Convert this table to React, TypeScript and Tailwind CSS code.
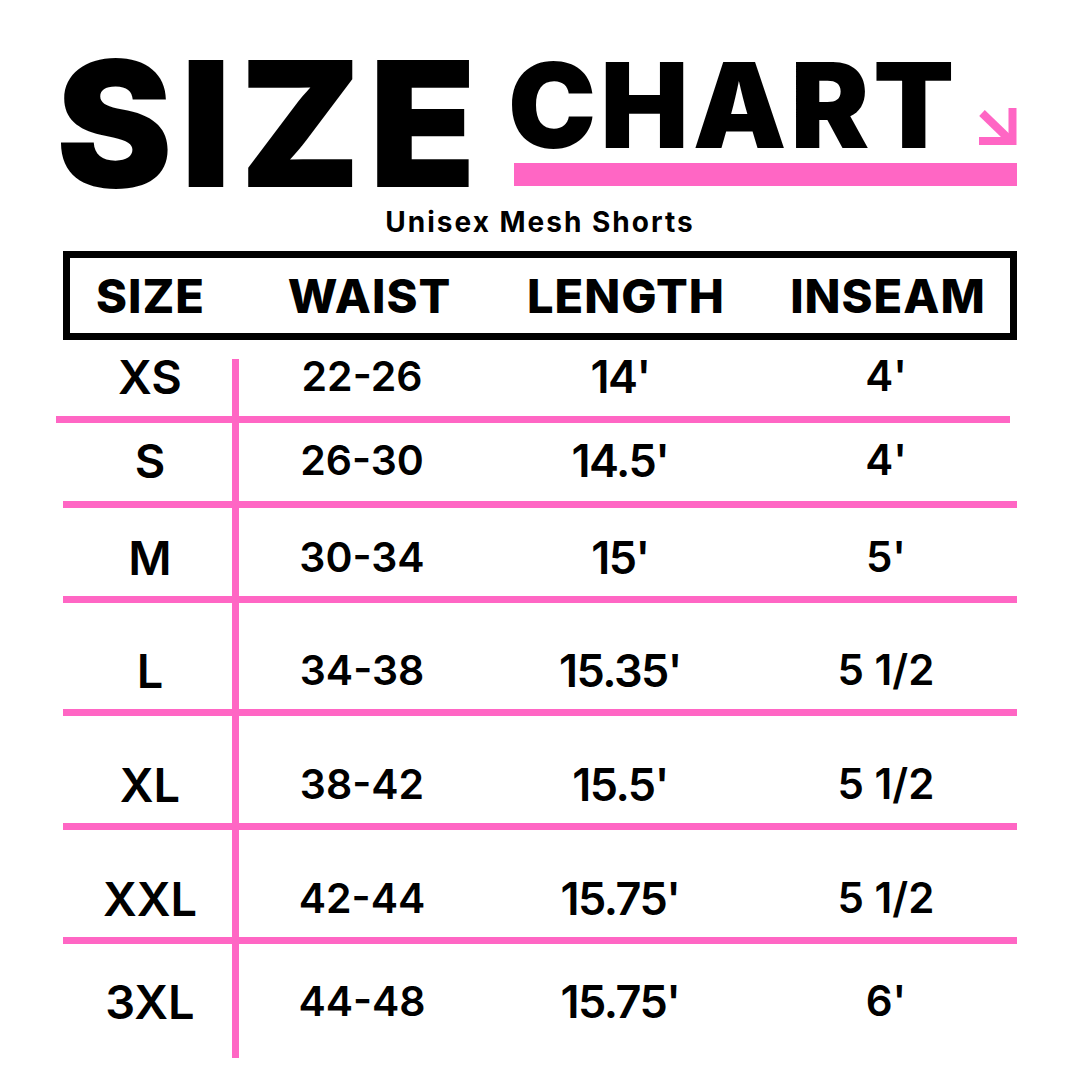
import React from "react";

const rows = [
  { size: "XS", waist: "22-26", length: "14'", inseam: "4'", mt: "mt-[19px]", h: "h-[57px]", c: "h-[34px]" },
  { size: "S", waist: "26-30", length: "14.5'", inseam: "4'", mt: "", h: "h-[78px]", c: "h-[74px]" },
  { size: "M", waist: "30-34", length: "15'", inseam: "5'", mt: "", h: "h-[88px]", c: "h-[98px]" },
  { size: "L", waist: "34-38", length: "15.35'", inseam: "5 1/2", mt: "", h: "h-[106px]", c: "h-[134px]" },
  { size: "XL", waist: "38-42", length: "15.5'", inseam: "5 1/2", mt: "", h: "h-[107px]", c: "h-[136px]" },
  { size: "XXL", waist: "42-44", length: "15.75'", inseam: "5 1/2", mt: "", h: "h-[107px]", c: "h-[136px]" },
  { size: "3XL", waist: "44-48", length: "15.75'", inseam: "6'", mt: "", h: "h-[108px]", c: "h-[114px]" },
];

const Arrow: React.FC = () => (
  <svg width="38" height="38" viewBox="0 0 38 38" className="mt-[62px] shrink-0">
    <line x1="3" y1="5" x2="32" y2="33" stroke="#ff66c4" strokeWidth="8" />
    <path d="M0 33 H33.5 V0" fill="none" stroke="#ff66c4" strokeWidth="8" />
  </svg>
);

const App: React.FC = () => {
  return (
    <div
      className="w-[1080px] h-[1080px] bg-white text-black overflow-hidden"
      style={{ fontFamily: "Inter, 'Noto Sans', sans-serif" }}
    >
      {/* Title */}
      <div className="flex pt-[43px]">
        <div className="pl-[56px] text-[175px] leading-[160px] font-black tracking-[8px]">
          SIZE
        </div>
        <div className="ml-auto mr-[63px] w-[503px] pt-[3px]">
          <div className="flex justify-between items-start">
            <span className="-ml-[6px] text-[118px] leading-none font-black tracking-[4px]">
              CHART
            </span>
            <Arrow />
          </div>
          <div className="h-[23px] -mt-px bg-[#ff66c4]"></div>
        </div>
      </div>

      <p className="mt-[5px] text-center text-[28px] leading-none font-bold tracking-[2px]">
        Unisex Mesh Shorts
      </p>

      {/* Header */}
      <div className="mx-[63px] mt-[15px] h-[89px] border-[7px] border-black grid grid-cols-[161px_277px_236px_1fr] items-center text-[47px] leading-none font-extrabold tracking-[1px]">
        <div className="text-center">SIZE</div>
        <div className="text-center">WAIST</div>
        <div className="text-center">LENGTH</div>
        <div className="text-center pl-[22px]">INSEAM</div>
      </div>

      {/* Body */}
      <div className="flex flex-col">
        {rows.map((r, i) => (
          <React.Fragment key={r.size}>
            {i > 0 && (
              <div
                className={`h-[7px] bg-[#ff66c4] ${
                  i === 1 ? "ml-[56px] mr-[70px]" : "mx-[63px]"
                }`}
              ></div>
            )}
            <div
              className={`mx-[63px] grid grid-cols-[176px_246px_270px_1fr] ${r.h} ${r.mt}`}
            >
              <div className="border-r-[7px] border-[#ff66c4] pl-[5px]">
                <div className={`${r.c} flex items-center justify-center text-[47px] leading-none font-semibold`}>
                  {r.size}
                </div>
              </div>
              <div className={`${r.c} flex items-center justify-center text-[41px] leading-none font-semibold`}>
                {r.waist}
              </div>
              <div className={`${r.c} flex items-center justify-center text-[45px] leading-none font-semibold tracking-[-1.5px]`}>
                {r.length}
              </div>
              <div className={`${r.c} flex items-center justify-center text-[42px] leading-none font-semibold`}>
                {r.inseam}
              </div>
            </div>
          </React.Fragment>
        ))}
      </div>
    </div>
  );
};

export default App;
